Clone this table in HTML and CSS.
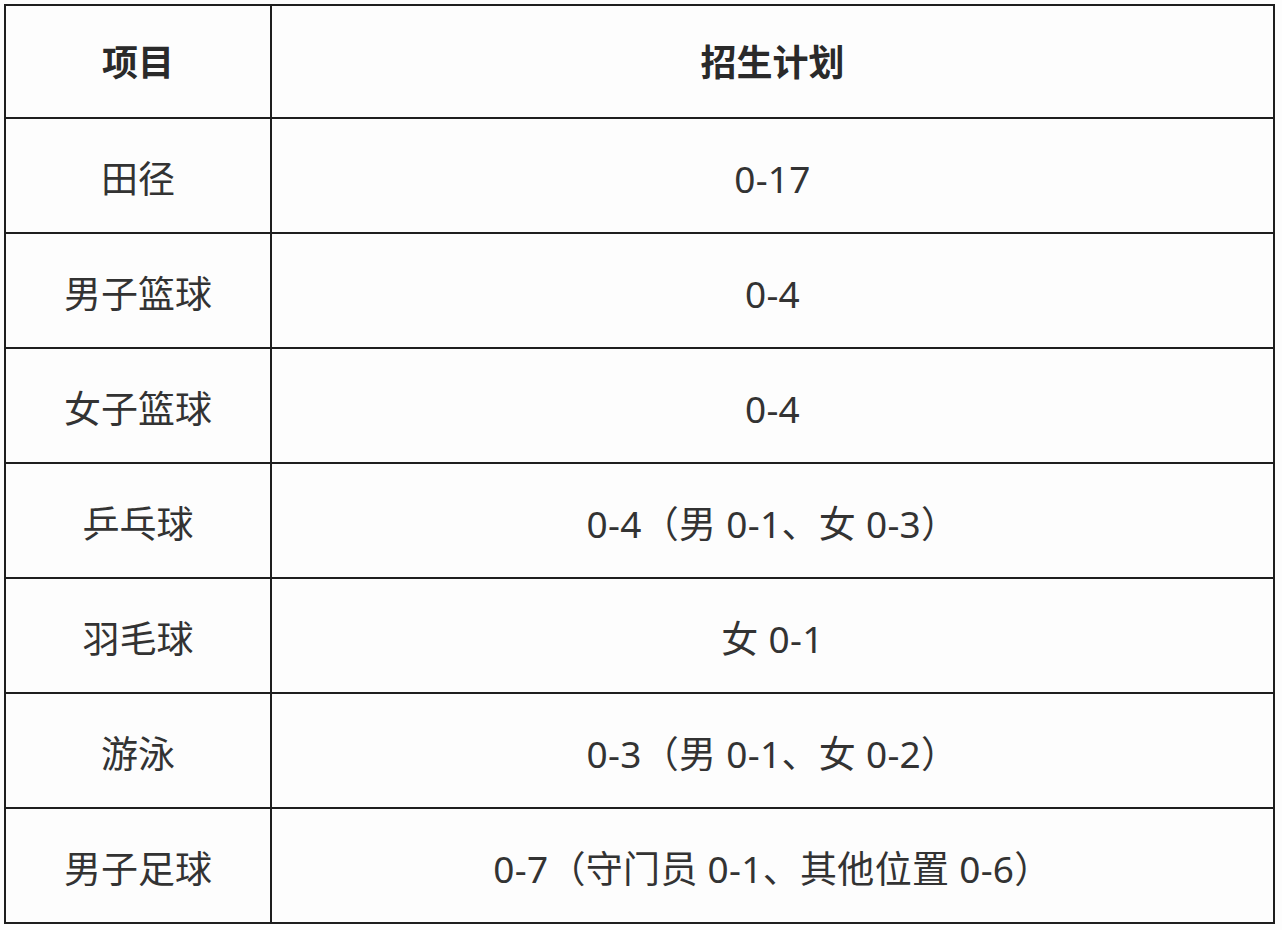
FILE: index.html
```html
<!DOCTYPE html>
<html lang="zh-CN">
<head>
<meta charset="utf-8">
<title>招生计划</title>
<link rel="stylesheet" href="styles.css">
</head>
<body>
<table class="plan">
  <thead>
    <tr class="head-row"><th class="c1">项目</th><th class="c2">招生计划</th></tr>
  </thead>
  <tbody>
    <tr><td class="c1">田径</td><td class="c2">0-17</td></tr>
    <tr><td class="c1">男子篮球</td><td class="c2">0-4</td></tr>
    <tr><td class="c1">女子篮球</td><td class="c2">0-4</td></tr>
    <tr><td class="c1">乒乓球</td><td class="c2">0-4（男 0-1、女 0-3）</td></tr>
    <tr><td class="c1">羽毛球</td><td class="c2">女 0-1</td></tr>
    <tr><td class="c1">游泳</td><td class="c2">0-3（男 0-1、女 0-2）</td></tr>
    <tr><td class="c1">男子足球</td><td class="c2">0-7（守门员 0-1、其他位置 0-6）</td></tr>
  </tbody>
</table>
</body>
</html>
```

FILE: styles.css
```css
html, body {
  margin: 0;
  padding: 0;
  background: #fdfdfd;
}
body {
  padding: 4px 0 0 4px;
  font-family: "Noto Sans", "Noto Sans CJK SC", sans-serif;
  color: #333;
}
.plan {
  border-collapse: separate;
  border-spacing: 0;
  border-top: 2px solid #1e1e1e;
  border-left: 2px solid #1e1e1e;
  width: 1271px;
  table-layout: fixed;
}
.plan th, .plan td {
  border-right: 2px solid #1e1e1e;
  border-bottom: 2px solid #1e1e1e;
  text-align: center;
  vertical-align: middle;
  padding: 0;
  font-size: 37px;
  box-sizing: border-box;
  font-weight: 400;
  line-height: 1;
}
.plan th {
  font-weight: 700;
  font-size: 36px;
  color: #2a2a2a;
  height: 113px;
  padding-top: 2px;
}
.plan td {
  height: 115px;
  padding-top: 5px;
}
.plan .c1 {
  width: 266px;
}
.plan td.c2 {
  letter-spacing: 0.3px;
}
```
